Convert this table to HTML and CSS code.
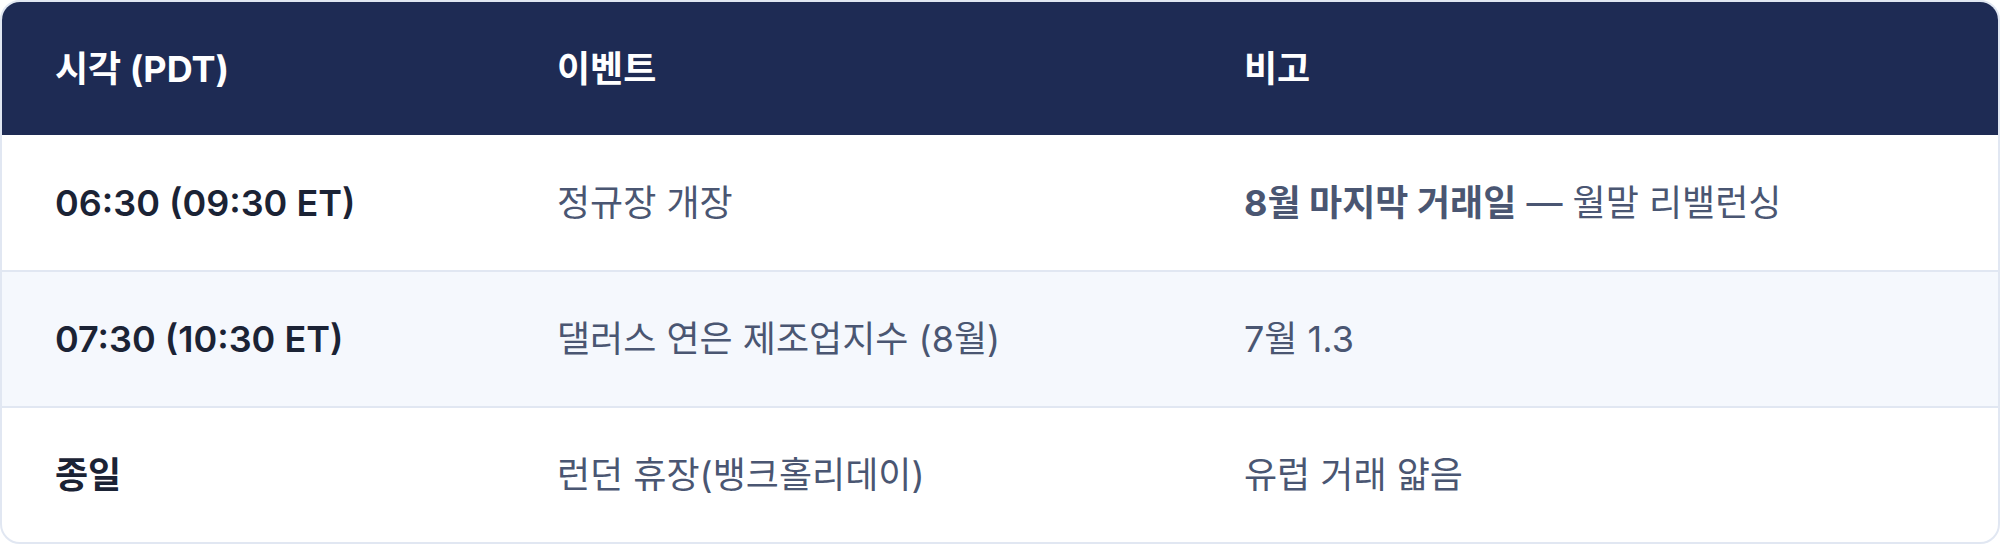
FILE: index.html
```html
<!DOCTYPE html>
<html lang="ko">
<head>
<meta charset="utf-8">
<title>일정</title>
<link rel="stylesheet" href="styles.css">
</head>
<body>
<div class="card">
  <table class="schedule">
    <colgroup>
      <col class="c-time">
      <col class="c-event">
      <col class="c-note">
    </colgroup>
    <thead>
      <tr class="head-row">
        <th>시각 (PDT)</th>
        <th>이벤트</th>
        <th>비고</th>
      </tr>
    </thead>
    <tbody>
      <tr class="row">
        <td class="time">06:30 (09:30 ET)</td>
        <td class="event">정규장 개장</td>
        <td class="note"><strong>8월 마지막 거래일</strong> — 월말 리밸런싱</td>
      </tr>
      <tr class="row alt">
        <td class="time">07:30 (10:30 ET)</td>
        <td class="event">댈러스 연은 제조업지수 (8월)</td>
        <td class="note">7월 1.3</td>
      </tr>
      <tr class="row last">
        <td class="time">종일</td>
        <td class="event">런던 휴장(뱅크홀리데이)</td>
        <td class="note">유럽 거래 얇음</td>
      </tr>
    </tbody>
  </table>
</div>
</body>
</html>
```
FILE: styles.css
```css
html, body {
  margin: 0;
  padding: 0;
  background: #ffffff;
}

body {
  font-family: Inter, "Noto Sans CJK KR", sans-serif;
  width: 2000px;
  height: 544px;
}

.card {
  box-sizing: border-box;
  width: 2000px;
  height: 544px;
  border: 2px solid #e1e7f2;
  border-radius: 20px;
  overflow: hidden;
  background: #ffffff;
}

.schedule {
  width: 100%;
  border-collapse: collapse;
  table-layout: fixed;
}

.c-time { width: 502px; }
.c-event { width: 687px; }
.c-note { width: auto; }

.head-row {
  background: #1e2b54;
}

.head-row th {
  height: 133px;
  padding: 0 0 0 53px;
  text-align: left;
  vertical-align: middle;
  color: #ffffff;
  font-weight: 700;
  font-size: 36px;
  line-height: 50px;
}

.row td {
  box-sizing: border-box;
  height: 136px;
  padding: 0 0 0 53px;
  vertical-align: middle;
  font-size: 36px;
  line-height: 50px;
  color: #4a5672;
  border-bottom: 2px solid #e1e7f2;
}

.row.last td {
  height: 135px;
  border-bottom: none;
}

.row.alt {
  background: #f5f8fd;
}

.row .time {
  font-weight: 600;
  color: #1b2335;
}

.note strong {
  font-weight: 700;
}
```
